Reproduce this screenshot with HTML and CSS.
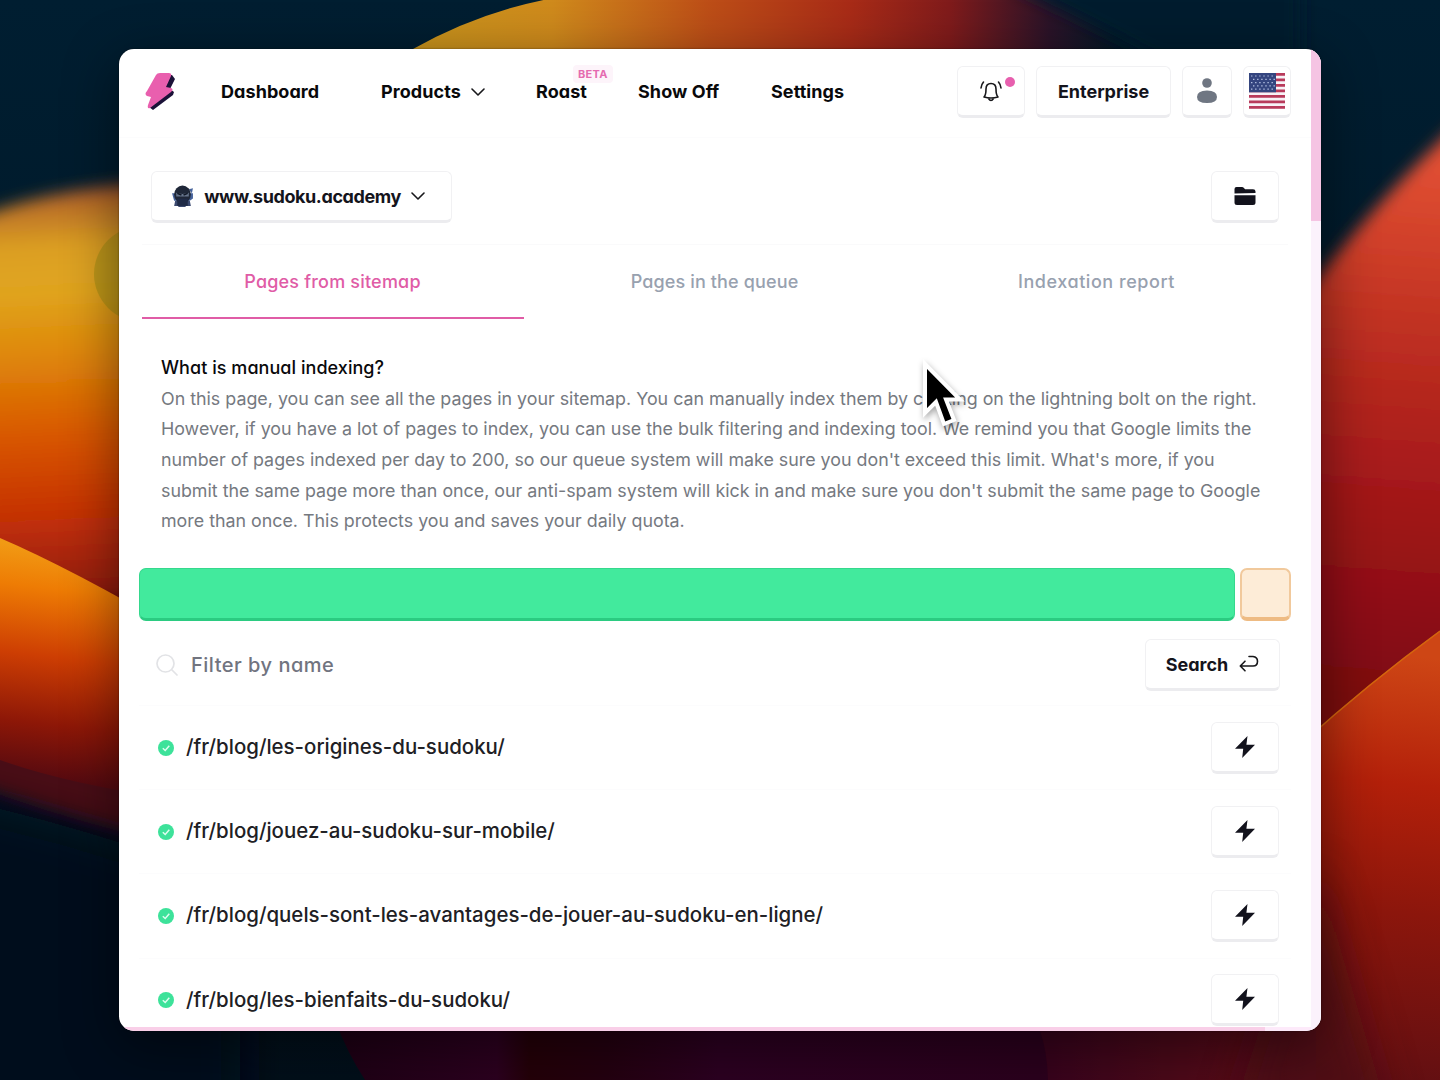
FILE: index.html
```html
<!DOCTYPE html>
<html lang="en">
<head>
<meta charset="utf-8">
<title>Manual indexing</title>
<link rel="stylesheet" href="styles.css">
</head>
<body>
<svg class="wallpaper" viewBox="0 0 1440 1080" aria-hidden="true">
  <defs>
    <filter id="soft" x="-20%" y="-20%" width="140%" height="140%"><feGaussianBlur stdDeviation="8"/></filter>
    <filter id="wide" x="-60%" y="-60%" width="220%" height="220%"><feGaussianBlur stdDeviation="20"/></filter>
    <linearGradient id="sky" x1="0" y1="0" x2="0" y2="1"><stop offset="0" stop-color="#001e31"/><stop offset=".6" stop-color="#001624"/><stop offset="1" stop-color="#020f1a"/></linearGradient>
    <linearGradient id="top" gradientUnits="userSpaceOnUse" x1="410" y1="0" x2="1120" y2="0"><stop offset="0" stop-color="#c8941c"/><stop offset=".2" stop-color="#cf8a1c"/><stop offset=".42" stop-color="#bd4e17"/><stop offset=".62" stop-color="#a82b17"/><stop offset=".76" stop-color="#801b1b"/><stop offset=".9" stop-color="#2b1328"/><stop offset="1" stop-color="#001827"/></linearGradient>
    <linearGradient id="left" gradientUnits="userSpaceOnUse" x1="40" y1="170" x2="60" y2="600"><stop offset="0" stop-color="#7c2331"/><stop offset=".08" stop-color="#b86d28"/><stop offset=".18" stop-color="#dc9f22"/><stop offset=".28" stop-color="#e0a51f"/><stop offset=".43" stop-color="#df8707"/><stop offset=".62" stop-color="#d85605"/><stop offset=".8" stop-color="#c53106"/><stop offset="1" stop-color="#8c1a0c"/></linearGradient>
    <linearGradient id="petal" gradientUnits="userSpaceOnUse" x1="30" y1="545" x2="0" y2="815"><stop offset="0" stop-color="#f19a14"/><stop offset=".15" stop-color="#ee7c04"/><stop offset=".4" stop-color="#cd3e03"/><stop offset=".65" stop-color="#8d1707"/><stop offset=".85" stop-color="#560a10"/><stop offset="1" stop-color="#3a0a12"/></linearGradient>
    <linearGradient id="right" gradientUnits="userSpaceOnUse" x1="1400" y1="170" x2="1360" y2="700"><stop offset="0" stop-color="#df4d31"/><stop offset=".3" stop-color="#bf3021"/><stop offset=".65" stop-color="#9f1418"/><stop offset="1" stop-color="#7c0b10"/></linearGradient>
    <linearGradient id="rightlow" gradientUnits="userSpaceOnUse" x1="1400" y1="655" x2="1360" y2="1080"><stop offset="0" stop-color="#ce4615"/><stop offset=".3" stop-color="#b3200a"/><stop offset=".6" stop-color="#8c160c"/><stop offset="1" stop-color="#620f12"/></linearGradient>
    <linearGradient id="floor" gradientUnits="userSpaceOnUse" x1="330" y1="0" x2="1440" y2="0"><stop offset="0" stop-color="#1d0014"/><stop offset=".15" stop-color="#2c001f"/><stop offset=".18" stop-color="#240008"/><stop offset=".25" stop-color="#240010"/><stop offset=".35" stop-color="#2c0021"/><stop offset=".64" stop-color="#2b001d"/><stop offset=".75" stop-color="#440819"/><stop offset=".9" stop-color="#680f14"/><stop offset="1" stop-color="#7b1010"/></linearGradient>
  </defs>
  <rect width="1440" height="1080" fill="url(#sky)"/>
  <path d="M413 49 Q500 0 600-8 H1130 V60 H413Z" fill="url(#top)"/>
  <path d="M950-40 Q1050 0 1160 60 H1300 V-40Z" fill="#001c2e" filter="url(#soft)"/>
  <path d="M-100 258 Q30 170 240 184 V640 H-100Z" fill="url(#left)" filter="url(#soft)"/>
  <circle cx="142" cy="274" r="48" fill="#9c8a12" opacity=".5"/>
  <path d="M-100 600 H240 V856 Q70 830 -100 755Z" fill="#480a12" filter="url(#soft)"/>
  <path d="M0 538 Q70 568 180 632 V800 Q70 785 0 760Z" fill="url(#petal)"/>
  <path d="M-120 785 Q50 812 240 885 V1240 H-120Z" fill="#01111c" filter="url(#wide)"/>
  <path d="M1240 400 Q1320 245 1500 85 V760 H1240Z" fill="url(#right)" filter="url(#soft)"/>
  <path d="M335 1020 Q350 1060 372 1090 H1440 V1020Z" fill="url(#floor)"/>
  <path d="M1040 1031 Q1047 1050 1048 1080 H1440 V1031Z" fill="#5a0c1a" opacity=".25"/>
  <path d="M1316 731 Q1370 682 1440 631 V1080 H1316Z" fill="url(#rightlow)"/>
  <path d="M1300 745 Q1370 682 1440 631" fill="none" stroke="#d4660d" stroke-width="1.5"/>
  <path d="M1230 1120 L1315 860 L1390 1120Z" fill="#430a18" opacity=".6" filter="url(#wide)"/>
</svg>

<div class="window">
 <div class="page">
  <header class="topbar">
    <svg class="logo" viewBox="0 0 32 40"><path d="M17 3 L27 3 L30 7 L25 17 L29 20 L28 23 L8 38 L4 35Z" fill="#1b1238"/><path d="M11 3 Q12 1 15 1 L24 1 Q27 1 26 4 L21 15 L26 16 Q29 17 26 20 L5 36 Q2 37 3 33 L6 25 L2 24 Q-1 22 2 19 Z" fill="#e95fae"/></svg>
    <nav class="nav">
      <a>Dashboard</a>
      <a>Products<svg class="chev" viewBox="0 0 14 10"><path d="M1 2 L7 8 L13 2"/></svg></a>
      <a>Roast<span class="beta">BETA</span></a>
      <a>Show Off</a>
      <a>Settings</a>
    </nav>
    <div class="actions">
      <button class="btn bell"><svg viewBox="0 0 24 24" width="24" height="24"><path d="M5 18 Q7 16 7 10 Q7 4.500 12 4.500 Q17 4.500 17 10 Q17 16 19 18 Q12 20 5 18Z M9.500 19.500 Q12 23.500 14.500 19.500 M2 9 Q2.300 5.500 4.500 3 M22 9 Q21.700 5.500 19.500 3"/></svg><i class="dot"></i></button>
      <button class="btn plan">Enterprise</button>
      <button class="btn user"><svg viewBox="0 0 22 26" width="22" height="26"><circle cx="11" cy="5" r="4.800"/><path d="M1 19 Q1 12.500 11 12.500 Q21 12.500 21 19 Q21 25 11 25 Q1 25 1 19Z"/></svg></button>
      <button class="btn flag"><svg viewBox="0 0 36 36" width="36" height="36"><rect width="36" height="36" rx="2" fill="#f7f2f7"/><path d="M0 1.400H36M0 6.900H36M0 12.400H36M0 17.900H36M0 23.400H36M0 28.900H36M0 34.400H36" stroke="#b83a5b" stroke-width="2.800"/><rect width="27" height="19.300" fill="#34457f"/><path d="M2 3H26M4 6.300H26M2 9.600H26M4 12.900H26M2 16.200H26" stroke="#b3c0e2" stroke-width="1.200" stroke-dasharray="1.400 2.700"/></svg></button>
    </div>
  </header>

  <section class="sitebar">
    <button class="btn site">
      <svg viewBox="0 0 20 22" width="21" height="23"><path d="M3 15H17L18 20H13V21H6V20H2Z" fill="#3c4a70"/><path d="M16 4L20 3L19 8Z M0 8H20V13L17 15H2Z" fill="#47639b"/><ellipse cx="10" cy="9" rx="8" ry="8.500" fill="#1f2738"/><path d="M4 7.500 Q10 9.500 16 7.500 V11 H4Z" fill="#66748b"/><path d="M5 8 L9 9.600 M15 8 L11 9.600" stroke="#111827" stroke-width="1.500"/><rect x="5" y="13" width="10" height="7" fill="#202b47"/></svg>
      <span class="host">www.sudoku.academy</span><svg class="chev" viewBox="0 0 14 10"><path d="M1 2 L7 8 L13 2"/></svg>
    </button>
    <button class="btn sq"><svg viewBox="0 0 22 20" width="22" height="20"><path d="M.5 7.500V3Q.5 1 2.500 1H8Q9 1 10 2L11 3.200H19Q21.500 3.200 21.500 5.500V7Z M.5 9.200H21.500V16.500Q21.500 19 19 19H3Q.5 19 .5 16.500Z"/></svg></button>
  </section>

  <section class="tabs">
    <a class="tab on">Pages from sitemap</a>
    <a class="tab queue">Pages in the queue</a>
    <a class="tab report">Indexation report</a>
  </section>

  <section class="about">
    <h2>What is manual indexing?</h2>
    <p>On this page, you can see all the pages in your sitemap. You can manually index them by clicking on the lightning bolt on the right.<br>However, if you have a lot of pages to index, you can use the bulk filtering and indexing tool. We remind you that Google limits the<br>number of pages indexed per day to 200, so our queue system will make sure you don't exceed this limit. What's more, if you<br>submit the same page more than once, our anti-spam system will kick in and make sure you don't submit the same page to Google<br>more than once. This protects you and saves your daily quota.</p>
  </section>

  <section class="progress"><div class="done"></div><div class="left"></div></section>

  <section class="filter">
    <svg viewBox="0 0 22 22" width="22" height="22"><circle cx="9.500" cy="9.500" r="8.500"/><path d="M16 16 L21 21"/></svg>
    <span class="ph">Filter by name</span>
    <button class="btn search">Search<svg viewBox="0 0 20 18" width="20" height="18"><path d="M10 1.500H14Q18.500 2 18.500 6.300Q18.500 11 14 11H1.500M6 6.200L1.300 11L6 15.800"/></svg></button>
  </section>

  <ul class="rows">
    <li><svg class="ok" viewBox="0 0 16 16"><circle cx="8" cy="8" r="8"/><path d="M4.800 8.300L7.200 10.500L11.300 5.800"/></svg><span class="url">/fr/blog/les-origines-du-sudoku/</span><button class="btn sq"><svg viewBox="0 0 22 24" width="22" height="24"><path d="M13.500 1L1 13.700H9.200L8.200 23L21 9.800H12.400Z"/></svg></button></li>
    <li><svg class="ok" viewBox="0 0 16 16"><circle cx="8" cy="8" r="8"/><path d="M4.800 8.300L7.200 10.500L11.300 5.800"/></svg><span class="url">/fr/blog/jouez-au-sudoku-sur-mobile/</span><button class="btn sq"><svg viewBox="0 0 22 24" width="22" height="24"><path d="M13.500 1L1 13.700H9.200L8.200 23L21 9.800H12.400Z"/></svg></button></li>
    <li><svg class="ok" viewBox="0 0 16 16"><circle cx="8" cy="8" r="8"/><path d="M4.800 8.300L7.200 10.500L11.300 5.800"/></svg><span class="url">/fr/blog/quels-sont-les-avantages-de-jouer-au-sudoku-en-ligne/</span><button class="btn sq"><svg viewBox="0 0 22 24" width="22" height="24"><path d="M13.500 1L1 13.700H9.200L8.200 23L21 9.800H12.400Z"/></svg></button></li>
    <li><svg class="ok" viewBox="0 0 16 16"><circle cx="8" cy="8" r="8"/><path d="M4.800 8.300L7.200 10.500L11.300 5.800"/></svg><span class="url">/fr/blog/les-bienfaits-du-sudoku/</span><button class="btn sq"><svg viewBox="0 0 22 24" width="22" height="24"><path d="M13.500 1L1 13.700H9.200L8.200 23L21 9.800H12.400Z"/></svg></button></li>
  </ul>
 </div>
 <div class="track"><div class="thumb"></div></div>
 <div class="hbar"></div>
</div>
<svg class="cursor" viewBox="0 0 50 76" width="50" height="76"><path d="M7 7 V56 L18 45 L26 67 L36 63 L28 42.500 H42Z" fill="#000" stroke="#fff" stroke-width="4"/></svg>
</body>
</html>
```
FILE: styles.css
```css
* { box-sizing: border-box; }
body { margin: 0; width: 1440px; height: 1080px; overflow: hidden; background: #001a2a; font-family: Inter, "Noto Sans", sans-serif; color: #14141c; position: relative; }
.wallpaper { position: absolute; inset: 0; width: 1440px; height: 1080px; }
.window { position: relative; width: 1202px; height: 982px; margin: 49px 0 0 119px; border-radius: 15px; overflow: hidden; background: #fff; display: grid; grid-template: 1fr 4px / 1fr 10px; box-shadow: 0 14px 55px rgba(0,0,0,.48), 0 0 2px rgba(0,0,0,.5); }
.window * { flex-shrink: 0; }
.page { overflow: hidden; min-height: 0; display: flex; flex-direction: column; }
.track { grid-column: 2; grid-row: 1 / 3; background: #fbf2fc; }
.thumb { height: 172px; background: #f5c4e3; }
.hbar { grid-row: 2; grid-column: 1; background: linear-gradient(90deg, #f9cfe8 0 1146px, #fdeafa 1146px); }

.nav, .btn, .tab, h2, .ph { font-feature-settings: "cv11"; }
.topbar { height: 89px; display: flex; align-items: center; padding: 0 20px 3px 26px; border-bottom: 1px solid #fcfcfd; }
.logo { width: 32px; height: 40px; }
.nav { display: grid; grid-template-columns: 160px 155px 102px 133px 110px; margin-left: 44px; width: 660px; font-size: 18px; font-weight: 650; color: #09090b; letter-spacing: .07px; }
.nav a { display: flex; align-items: center; position: relative; }
.chev { width: 14px; height: 10px; fill: none; stroke: #18181b; stroke-width: 1.6; stroke-linecap: round; stroke-linejoin: round; margin-left: 10px; }
.beta { position: absolute; left: 37px; top: -16px; padding: 2px 5px; border-radius: 4px; background: #fdf4fa; color: #e56bb0; font-size: 11px; line-height: 14px; font-weight: 700; letter-spacing: .3px; }
.actions { display: flex; gap: 11px; margin-left: auto; padding-top: 1px; }
.btn { font-family: inherit; font-size: 18px; font-weight: 650; color: #14141c; background: #fff; border: 1px solid #f1f1f3; border-bottom: 3px solid #ececef; border-radius: 6px; height: 52px; padding: 0; display: flex; align-items: center; justify-content: center; position: relative; }
.bell { width: 68px; }
.bell svg { fill: none; stroke: #18181b; stroke-width: 1.6; stroke-linecap: round; stroke-linejoin: round; }
.dot { position: absolute; width: 10px; height: 10px; border-radius: 50%; background: #e75fae; right: 9px; top: 10px; }
.plan { width: 135px; }
.user { width: 50px; }
.user svg { fill: #6f7682; }
.flag { width: 48px; }

.sitebar { height: 106px; padding: 12px 32px 0 32px; display: flex; align-items: center; justify-content: space-between; }
.site { width: 301px; padding-right: 6px; }
.host { margin-left: 11px; letter-spacing: -.42px; }
.sq { width: 68px; fill: #12121c; }

.tabs { height: 75px; margin: 0 23px 0 23px; display: grid; grid-template-columns: repeat(3, 1fr); border-top: 1px solid #fafafb; }
.tab { display: flex; align-items: center; justify-content: center; font-size: 18px; font-weight: 550; letter-spacing: .2px; color: #98a1af; border-bottom: 2px solid transparent; padding-right: 1px; }
.tab.on { color: #e05ca6; border-color: #e05ca6; }
.queue { letter-spacing: .14px; }
.report { letter-spacing: .55px; }

.about { padding: 34px 20px 0 42px; height: 249px; }
h2 { margin: 0; font-size: 18px; font-weight: 500; line-height: 30.6px; color: #09090b; letter-spacing: .05px; }
.about p { margin: 0; font-size: 17.84px; line-height: 30.65px; color: #75797f; white-space: nowrap; }

.progress { display: flex; gap: 5px; padding-left: 20px; height: 53px; }
.done { width: 1096px; background: #42ea9d; border: 1px solid #35d88d; border-bottom: 3px solid #2bcb81; border-radius: 7px; }
.left { width: 51px; background: #fdecd7; border: 2px solid #f1c99c; border-bottom: 4px solid #eebb83; border-radius: 7px; }

.filter { height: 85px; margin: 0 20px; padding: 4px 11px 0 17px; display: flex; align-items: center; border-bottom: 1px solid #fcfcfd; }
.filter > svg { fill: none; stroke: #e2e3e6; stroke-width: 1.7; stroke-linecap: round; }
.ph { margin-left: 13px; font-size: 20px; font-weight: 450; letter-spacing: .5px; color: #71747f; padding-bottom: 1px; }
.search { width: 135px; margin-left: auto; gap: 11px; }
.search svg { fill: none; stroke: #18181b; stroke-width: 1.6; stroke-linecap: round; stroke-linejoin: round; }

.rows { list-style: none; margin: 0 20px; padding: 0; }
.rows li { height: 84.2px; padding: 0 12px 0 19px; display: flex; align-items: center; border-bottom: 1px solid #fcfcfd; }
.ok { width: 16px; height: 16px; fill: #3de29a; }
.ok path { fill: none; stroke: #dffdf0; stroke-width: 1.5; }
.url { margin-left: 12px; font-size: 20.44px; font-weight: 500; color: #202024; padding-bottom: 2px; }
.rows .sq { margin-left: auto; }

.cursor { position: absolute; left: 918px; top: 357px; filter: drop-shadow(1px 3px 3px rgba(0,0,0,.35)); }
```
